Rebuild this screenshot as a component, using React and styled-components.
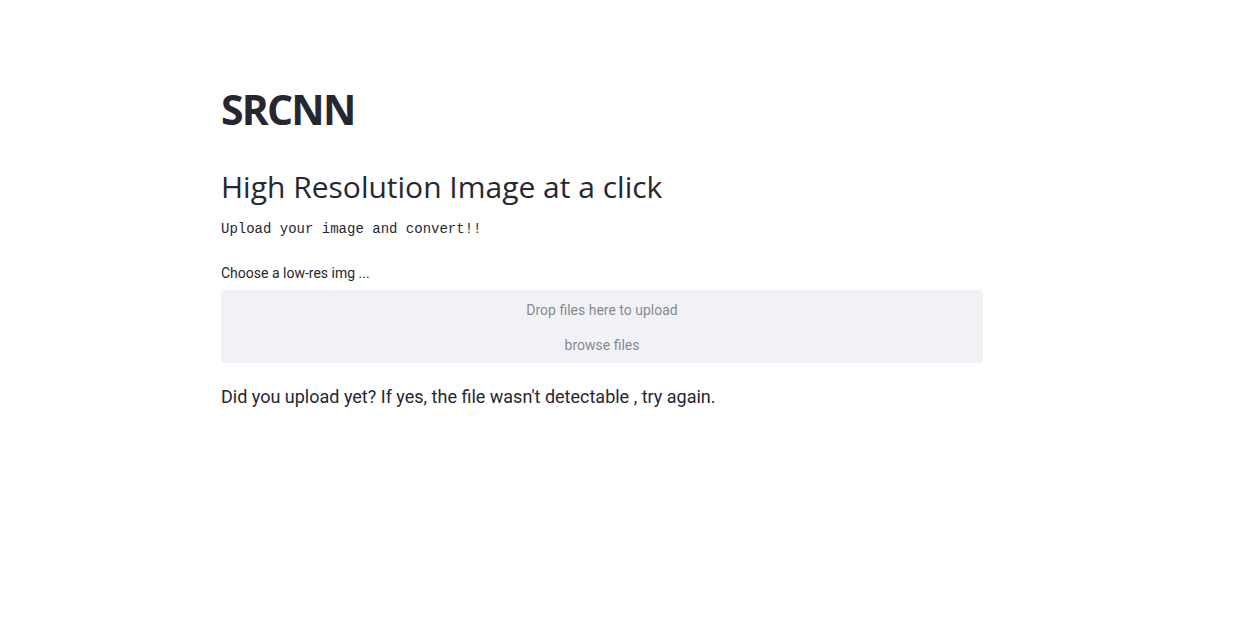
import React from 'react';
import styled, { createGlobalStyle } from 'styled-components';

const Global = createGlobalStyle`
    body {
        margin: 0;
        background: #ffffff;
        font-family: "Roboto", "Liberation Sans", sans-serif;
        color: rgb(38, 39, 48);
    }
`;

const Page = styled.main`
    display: flex;
    flex-direction: column;
    width: 762px;
    margin-left: 221px;
    padding-top: 84px;
`;

const Title = styled.h1`
    margin: 0;
    font-family: "Open Sans", "Liberation Sans", sans-serif;
    font-size: 41px;
    font-weight: 700;
    letter-spacing: -1.8px;
    line-height: 50px;
    color: rgb(38, 39, 48);
`;

const Subtitle = styled.h2`
    margin: 33px 0 0;
    font-family: "Open Sans", "Liberation Sans", sans-serif;
    font-size: 30px;
    font-weight: 400;
    line-height: 40px;
    color: rgb(38, 39, 48);
`;

const Code = styled.p`
    margin: 12px 0 0;
    font-family: "Liberation Mono", "DejaVu Sans Mono", monospace;
    font-size: 14px;
    line-height: 20px;
`;

const Label = styled.label`
    margin-top: 24px;
    font-size: 14px;
    line-height: 20px;
`;

const Dropzone = styled.div`
    display: flex;
    flex-direction: column;
    align-items: center;
    margin-top: 7px;
    height: 73px;
    border-radius: 4px;
    background: #f0f2f6;
    color: rgba(38, 39, 48, 0.55);
    font-size: 14px;
`;

const DropText = styled.span`
    margin-top: ${({ top }) => top}px;
    line-height: 20px;
`;

const Message = styled.p`
    margin: 22px 0 0;
    font-size: 18px;
    line-height: 24px;
`;

const App = () => {
    return (
        <>
            <Global />
            <Page>
                <Title>SRCNN</Title>
                <Subtitle>High Resolution Image at a click</Subtitle>
                <Code>Upload your image and convert!!</Code>
                <Label>Choose a low-res img ...</Label>
                <Dropzone>
                    <DropText top={10}>Drop files here to upload</DropText>
                    <DropText top={15}>browse files</DropText>
                </Dropzone>
                <Message>Did you upload yet? If yes, the file wasn't detectable , try again.</Message>
            </Page>
        </>
    );
};

export default App;
